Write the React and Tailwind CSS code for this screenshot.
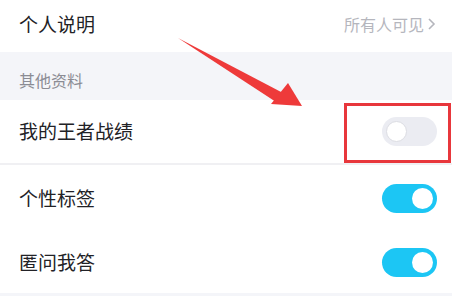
import React from 'react';

const Toggle = ({ on }) => (
  <div
    className={`flex items-center w-[55px] h-[29px] rounded-full px-[4px] ${
      on ? 'bg-[#1cc6f4] justify-end' : 'bg-[#ebecf2] justify-start'
    }`}
  >
    <div
      className={`w-[21px] h-[21px] rounded-full bg-white ${
        on ? '' : 'border border-[#dcdde3]'
      }`}
    />
  </div>
);

const Row = ({ label, children, className = '' }) => (
  <div className={`flex items-center justify-between pl-[19px] pr-[15px] bg-white ${className}`}>
    <span className="text-[19px] text-[#222226]">{label}</span>
    {children}
  </div>
);

export default function App() {
  return (
    <div
      className="relative w-[452px] h-[296px] overflow-hidden bg-[#f4f5f9]"
      style={{ fontFamily: '"Noto Sans CJK SC", "Noto Sans", sans-serif' }}
    >
      <Row label="个人说明" className="h-[52px] pb-[4px]">
        <span className="flex items-center text-[16px] text-[#b5b6bd]">
          所有人可见
          <svg width="10" height="14" viewBox="0 0 10 14" className="ml-[3px]">
            <path d="M2 2 L7 7 L2 12" fill="none" stroke="#b5b6bd" strokeWidth="1.6" />
          </svg>
        </span>
      </Row>

      <div className="h-[48px] flex items-end pb-[8px] pl-[19px] text-[16px] text-[#8b8c94]">
        其他资料
      </div>

      <Row label="我的王者战绩" className="h-[63px]">
        <Toggle on={false} />
      </Row>
      <div className="h-[2px] bg-[#f0f0f3]" />
      <Row label="个性标签" className="h-[66px]">
        <Toggle on />
      </Row>
      <Row label="匿问我答" className="h-[62px]">
        <Toggle on />
      </Row>

      {/* annotation overlay */}
      <div className="absolute left-[344px] top-[103px] w-[107px] h-[60px] border-[3px] border-[#e8373c]" />
      <svg className="absolute left-0 top-0" width="452" height="296" viewBox="0 0 452 296">
        <path d="M178 38 L283 93 L276 102 Z" fill="#ee3a3a" />
        <path d="M302 106 L271 104 L288 83 Z" fill="#ee3a3a" />
      </svg>
    </div>
  );
}
